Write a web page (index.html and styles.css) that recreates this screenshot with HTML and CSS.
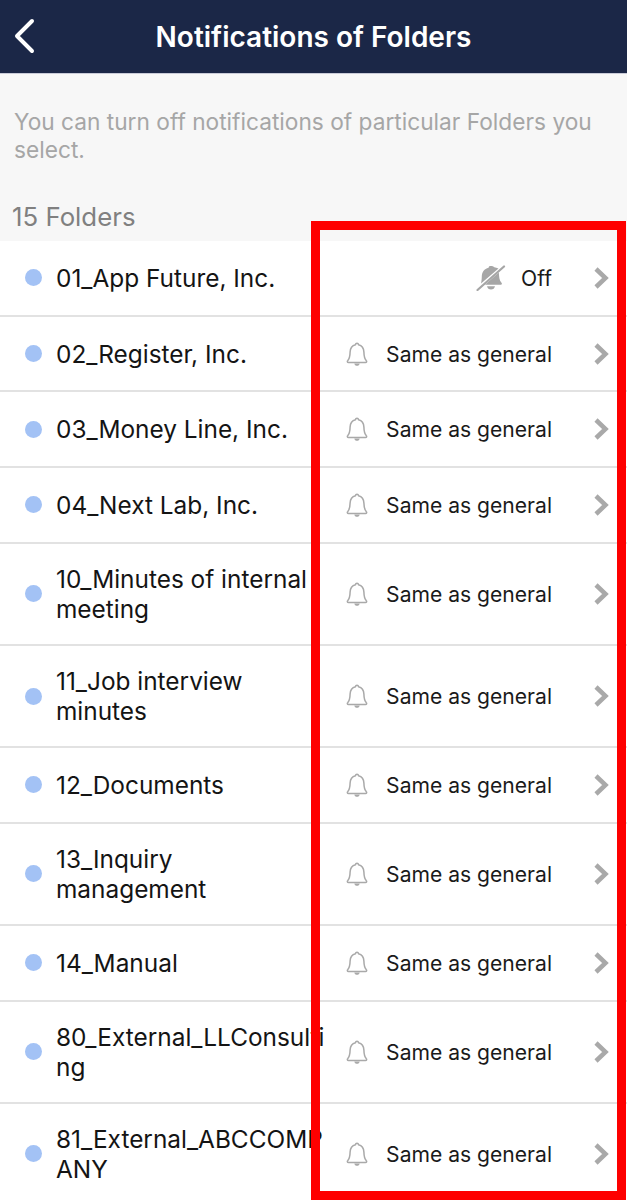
FILE: index.html
```html
<!DOCTYPE html>
<html lang="en">
<head>
<meta charset="utf-8">
<title>Notifications of Folders</title>
<link rel="stylesheet" href="styles.css">
</head>
<body>
<svg class="defs" width="0" height="0" aria-hidden="true">
  <symbol id="bell" viewBox="0 0 24 26">
    <path d="M12 2.2c-.9 0-1.400.6-1.500 1.500C7 4.600 5.200 7.400 5.100 11c-.1 4-.6 6.700-2.300 8.500-.8.800-.6 2 .7 2h17c1.300 0 1.500-1.200.7-2-1.700-1.800-2.200-4.500-2.300-8.500-.1-3.600-1.900-6.400-5.400-7.300-.1-.9-.6-1.500-1.500-1.500z" fill="none" stroke="#a9a9a9" stroke-width="1.500" stroke-linejoin="round"/>
    <path d="M9.300 22.500c.3 1.500 1.300 2.300 2.700 2.300s2.400-.8 2.700-2.300z" fill="#a9a9a9"/>
  </symbol>
  <symbol id="bell-off" viewBox="0 0 30 26">
    <path d="M14.500 1c-1.200 0-1.800.7-1.900 1.700C8.200 3.800 6 6.800 5.800 11.200c-.1 2.700-.2 5-.8 7.300L22.500 3.600C21 2.900 19.500 2.400 18.300 2.300 17.800 1.400 16 1 14.500 1z" fill="#a6a6a6"/>
    <path d="M22.800 7.500c.4 4.300.3 7.800 2.700 10.300.8.800.5 2-.7 2H9z" fill="#a6a6a6"/>
    <path d="M11 21.200c.4 2 1.900 3.300 4 3.300s3.600-1.300 4-3.300z" fill="#a6a6a6"/>
    <path d="M1.500 25L28 1.500" stroke="#a6a6a6" stroke-width="2.200" stroke-linecap="round"/>
  </symbol>
  <symbol id="chevron" viewBox="0 0 16 24">
    <path d="M3 3l9.500 9L3 21" fill="none" stroke="#a9a9a9" stroke-width="4.500"/>
  </symbol>
</svg>
<div class="screen">
  <header class="topbar">
    <svg class="back" viewBox="0 0 22 36" aria-hidden="true"><path d="M19 3L4 18l15 15" fill="none" stroke="#fff" stroke-width="4" stroke-linecap="round" stroke-linejoin="round"/></svg>
    <h1 class="title">Notifications of Folders</h1>
  </header>
  <p class="intro">You can turn off notifications of particular Folders you select.</p>
  <h2 class="count">15 Folders</h2>
  <ul class="list">
    <li class="row">
      <span class="dot"></span><span class="name">01_App Future, Inc.</span>
      <span class="status"><svg class="bell-off"><use href="#bell-off"/></svg><span class="label">Off</span></span>
      <svg class="chev"><use href="#chevron"/></svg>
    </li>
    <li class="row">
      <span class="dot"></span><span class="name">02_Register, Inc.</span>
      <span class="status"><svg class="bell"><use href="#bell"/></svg><span class="label">Same as general</span></span>
      <svg class="chev"><use href="#chevron"/></svg>
    </li>
    <li class="row">
      <span class="dot"></span><span class="name">03_Money Line, Inc.</span>
      <span class="status"><svg class="bell"><use href="#bell"/></svg><span class="label">Same as general</span></span>
      <svg class="chev"><use href="#chevron"/></svg>
    </li>
    <li class="row">
      <span class="dot"></span><span class="name">04_Next Lab, Inc.</span>
      <span class="status"><svg class="bell"><use href="#bell"/></svg><span class="label">Same as general</span></span>
      <svg class="chev"><use href="#chevron"/></svg>
    </li>
    <li class="row">
      <span class="dot"></span><span class="name">10_Minutes of internal meeting</span>
      <span class="status"><svg class="bell"><use href="#bell"/></svg><span class="label">Same as general</span></span>
      <svg class="chev"><use href="#chevron"/></svg>
    </li>
    <li class="row">
      <span class="dot"></span><span class="name">11_Job interview minutes</span>
      <span class="status"><svg class="bell"><use href="#bell"/></svg><span class="label">Same as general</span></span>
      <svg class="chev"><use href="#chevron"/></svg>
    </li>
    <li class="row">
      <span class="dot"></span><span class="name">12_Documents</span>
      <span class="status"><svg class="bell"><use href="#bell"/></svg><span class="label">Same as general</span></span>
      <svg class="chev"><use href="#chevron"/></svg>
    </li>
    <li class="row">
      <span class="dot"></span><span class="name narrow">13_Inquiry management</span>
      <span class="status"><svg class="bell"><use href="#bell"/></svg><span class="label">Same as general</span></span>
      <svg class="chev"><use href="#chevron"/></svg>
    </li>
    <li class="row">
      <span class="dot"></span><span class="name">14_Manual</span>
      <span class="status"><svg class="bell"><use href="#bell"/></svg><span class="label">Same as general</span></span>
      <svg class="chev"><use href="#chevron"/></svg>
    </li>
    <li class="row">
      <span class="dot"></span><span class="name">80_External_LLConsulting</span>
      <span class="status"><svg class="bell"><use href="#bell"/></svg><span class="label">Same as general</span></span>
      <svg class="chev"><use href="#chevron"/></svg>
    </li>
    <li class="row">
      <span class="dot"></span><span class="name">81_External_ABCCOMPANY</span>
      <span class="status"><svg class="bell"><use href="#bell"/></svg><span class="label">Same as general</span></span>
      <svg class="chev"><use href="#chevron"/></svg>
    </li>
  </ul>
  <div class="highlight"></div>
</div>
</body>
</html>
```
FILE: styles.css
```css
* { box-sizing: border-box; }
html, body { margin: 0; padding: 0; }
body { background: #f7f7f7; font-family: "Inter", "Liberation Sans", sans-serif; }
.defs { position: absolute; }
.screen { position: relative; width: 627px; height: 1203px; overflow: hidden; background: #f7f7f7; }
.topbar { position: relative; height: 74px; background: #1b2747; display: flex; align-items: center; justify-content: center; border-bottom: 1px solid #c9cbd8; padding-top: 1px; }
.back { position: absolute; left: 13px; top: 18px; width: 22px; height: 36px; }
.title { margin: 0; color: #fff; font-size: 28px; font-weight: 600; }
.intro { margin: 0; padding: 34px 14px 0; font-size: 22.700px; line-height: 28px; color: #a6a6a6; height: 125px; }
.count { margin: 0; padding: 0 12px; font-size: 25.800px; font-weight: 400; color: #808080; height: 42px; line-height: 36px; }
.list { margin: 0; padding: 0; list-style: none; background: #fff; }
.row { display: flex; align-items: center; min-height: 75.700px; padding: 20.100px 0 20.100px 25px; border-bottom: 2px solid #e2e2e2; font-size: 24.400px; color: #141414; }
.dot { flex: none; width: 17px; height: 17px; border-radius: 50%; background: #a3c2f5; margin-right: 14px; }
.name { flex: none; width: 273px; line-height: 30px; overflow-wrap: anywhere; }
.narrow { width: 200px; margin-right: 73px; }
.status { flex: 1; display: flex; align-items: center; justify-content: flex-end; font-size: 21.100px; color: #1a1a1a; }
.label { padding-top: 1px; }
.bell { width: 24px; height: 26px; margin-right: 17px; }
.bell-off { width: 30px; height: 26px; margin-right: 15px; }
.chev { flex: none; width: 16px; height: 24px; margin: 0 18px 0 41px; }
.highlight { position: absolute; left: 311px; top: 221px; width: 315px; height: 979px; border: 9px solid #fe0000; }
```
